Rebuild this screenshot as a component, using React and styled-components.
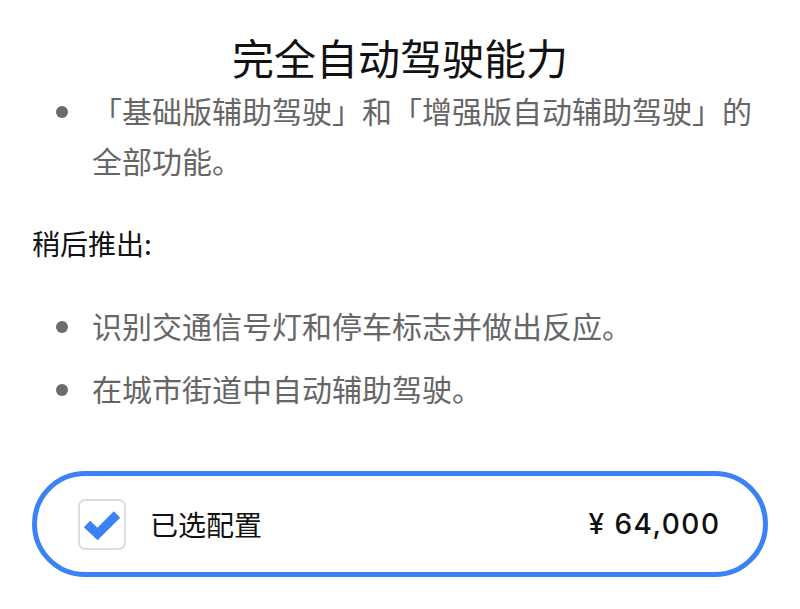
import React from "react";
import styled, { createGlobalStyle } from "styled-components";

const GlobalStyle = createGlobalStyle`
  html, body {
    margin: 0;
    padding: 0;
    background: #ffffff;
  }
  body {
    font-family: "Noto Sans", "Noto Sans CJK SC", sans-serif;
    color: #111111;
  }
`;

const laterItems = [
  "识别交通信号灯和停车标志并做出反应。",
  "在城市街道中自动辅助驾驶。",
];

export default function App() {
  return (
    <>
      <GlobalStyle />
      <Page>
        <Title>完全自动驾驶能力</Title>
        <BulletList>
          <BulletItem>
            <Dot />
            <BulletText>
              「基础版辅助驾驶」和「增强版自动辅助驾驶」的全部功能。
            </BulletText>
          </BulletItem>
        </BulletList>

        <SectionLabel>稍后推出:</SectionLabel>

        <BulletList $gap={13}>
          {laterItems.map((item) => (
            <BulletItem key={item}>
              <Dot />
              <BulletText>{item}</BulletText>
            </BulletItem>
          ))}
        </BulletList>

        <OptionCard>
          <CheckBox>
            <svg width="38" height="34" viewBox="0 0 38 34">
              <path
                d="M4 17 L14.5 27 L34 7.5"
                fill="none"
                stroke="#3b82f6"
                strokeWidth="9"
                strokeLinejoin="miter"
                strokeMiterlimit="4"
              />
            </svg>
          </CheckBox>
          <OptionLabel>已选配置</OptionLabel>
          <Price>¥ 64,000</Price>
        </OptionCard>
      </Page>
    </>
  );
}

const Page = styled.div`
  width: 800px;
  padding: 29px 32px 0 32px;
  box-sizing: border-box;
  display: flex;
  flex-direction: column;
`;

const Title = styled.h1`
  margin: 0;
  font-family: "Noto Sans CJK SC", sans-serif;
  font-size: 42px;
  font-weight: 400;
  line-height: 56px;
  text-align: center;
  color: #111111;
`;

const BulletList = styled.ul`
  list-style: none;
  margin: 0;
  padding: 0 0 0 24px;
  display: flex;
  flex-direction: column;
  gap: ${(p) => p.$gap || 0}px;
`;

const BulletItem = styled.li`
  display: flex;
  align-items: flex-start;
`;

const Dot = styled.span`
  flex: 0 0 12px;
  width: 12px;
  height: 12px;
  margin-top: 21px;
  margin-right: 24px;
  border-radius: 50%;
  background: #6b6b6b;
`;

const BulletText = styled.p`
  margin: 0;
  font-family: "Noto Sans CJK SC", sans-serif;
  font-size: 30px;
  line-height: 50px;
  color: #666666;
  width: 660px;
`;

const SectionLabel = styled.h2`
  margin: 33px 0 32px 0;
  font-family: "Noto Sans CJK SC", sans-serif;
  font-size: 28px;
  font-weight: 400;
  line-height: 50px;
  color: #111111;
`;

const OptionCard = styled.div`
  margin-top: 58px;
  height: 106px;
  box-sizing: border-box;
  border: 5px solid #3b82f6;
  border-radius: 53px;
  display: flex;
  align-items: center;
  padding: 0 44px 0 41px;
`;

const CheckBox = styled.div`
  width: 48px;
  height: 51px;
  box-sizing: border-box;
  border: 2px solid #dddddd;
  border-radius: 7px;
  display: flex;
  align-items: center;
  justify-content: center;
  margin-right: 24px;
`;

const OptionLabel = styled.span`
  flex: 1;
  font-family: "Noto Sans CJK SC", sans-serif;
  font-size: 28px;
  line-height: 40px;
  color: #111111;
`;

const Price = styled.span`
  font-family: Inter, "Noto Sans", sans-serif;
  font-size: 28px;
  font-weight: 500;
  line-height: 40px;
  color: #111111;
  letter-spacing: 1.5px;
  margin-right: -1.5px;
`;
